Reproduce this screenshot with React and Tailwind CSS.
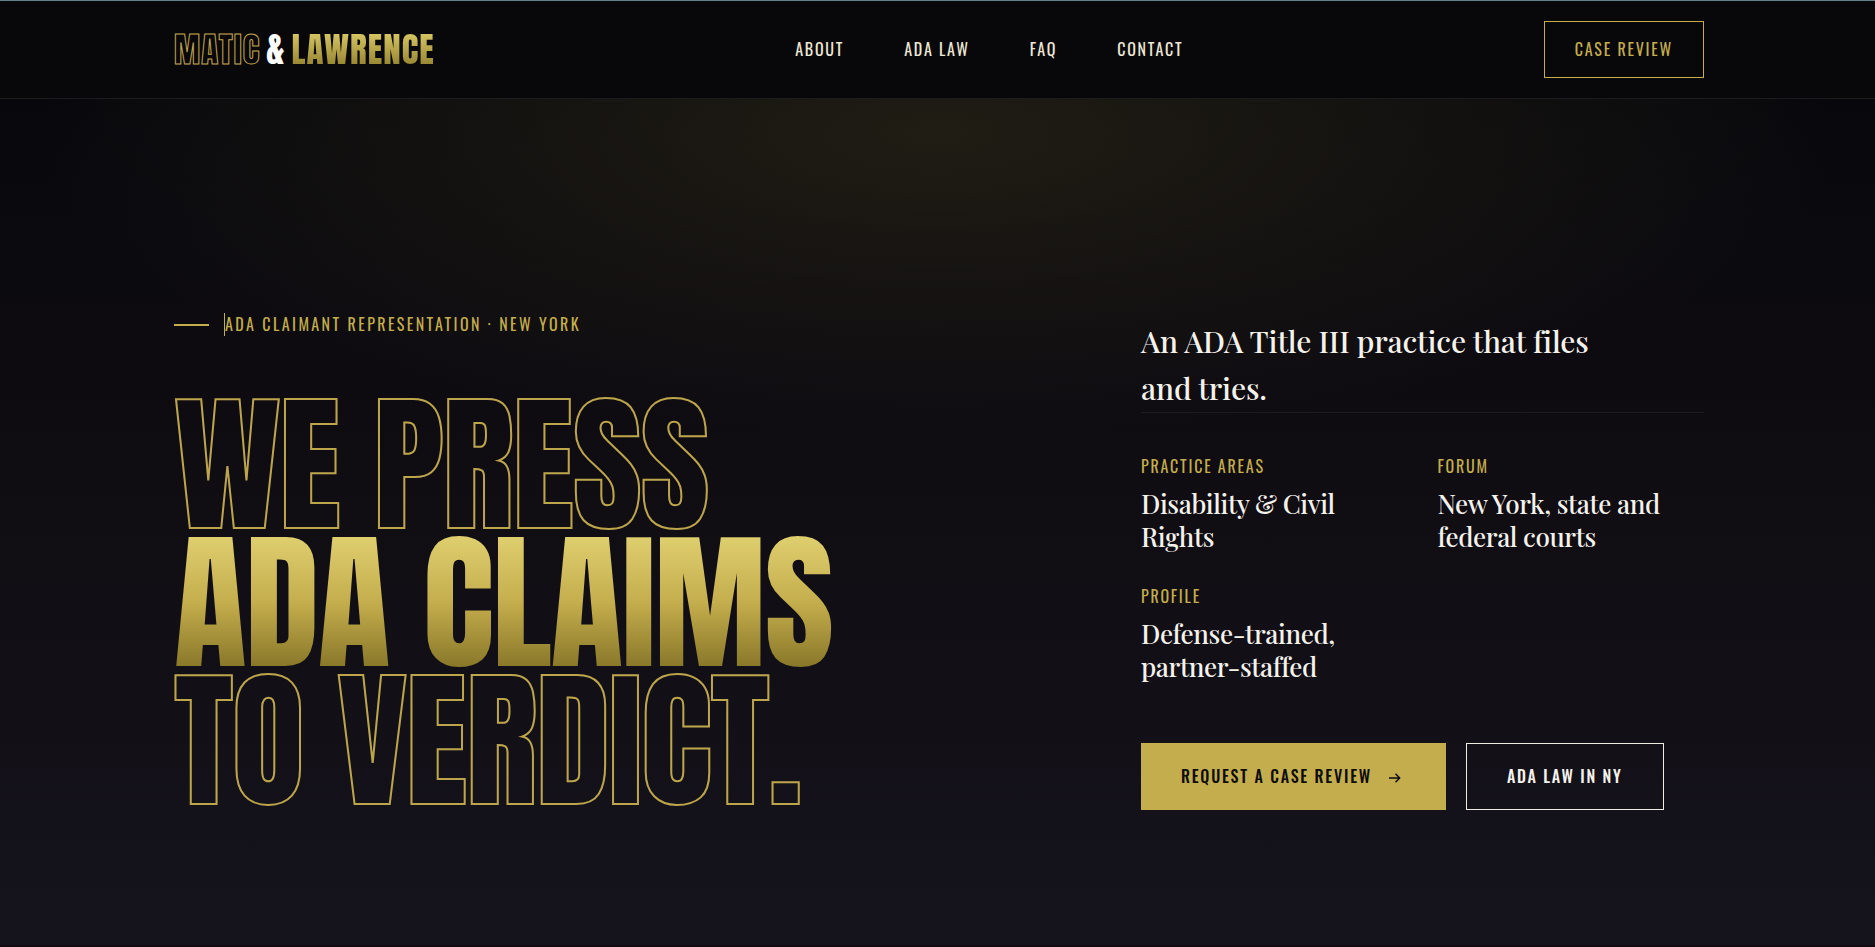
const display = "font-['Anton','Liberation_Sans',sans-serif] font-normal"
const label = "font-['Oswald','Liberation_Sans',sans-serif] text-[16px] leading-[23px] uppercase"
const serif = "font-['Playfair_Display','Liberation_Serif',serif] font-medium text-[#f5f2ec]"

const links = [
  { label: 'About', href: '#about' },
  { label: 'ADA Law', href: '#ada-law' },
  { label: 'FAQ', href: '#faq' },
  { label: 'Contact', href: '#contact' },
]

const facts = [
  { term: 'Practice Areas', value: 'Disability & Civil Rights' },
  { term: 'Forum', value: 'New York, state and federal courts' },
  { term: 'Profile', value: 'Defense-trained, partner-staffed' },
]

function Header() {
  return (
    <header className="border-t border-b border-t-[#5f8088] border-b-[#1c1b1d] bg-[#08080b]">
      <div className="flex items-center justify-between pl-[174px] pr-[171px] py-5">
        <a href="#top" className={`${display} flex items-center gap-1.5 text-[35px] leading-none tracking-[0.03em] uppercase`}>
          <span className="text-transparent [-webkit-text-stroke:1px_#c4a650]">Matic</span>
          <span className="text-white">&amp;</span>
          <span className="bg-linear-to-b from-[#d9c865] to-[#94832f] bg-clip-text text-transparent">Lawrence</span>
        </a>
        <nav className="flex gap-15">
          {links.map(l => (
            <a key={l.label} href={l.href} className={`${label} text-[#efe9d6] tracking-[0.11em]`}>
              {l.label}
            </a>
          ))}
        </nav>
        <a href="#review" className={`${label} border border-[#c4ad4c] px-[30px] py-4 text-[#c4ad4c] tracking-[0.11em]`}>
          Case Review
        </a>
      </div>
    </header>
  )
}

function Facts() {
  return (
    <dl className="grid grid-cols-2 gap-x-[30px] gap-y-8 border-t border-[#1c1b20] pt-[42px]">
      {facts.map(f => (
        <div key={f.term}>
          <dt className={`${label} text-[#c4ad4c] tracking-[0.11em]`}>{f.term}</dt>
          <dd className={`${serif} mt-[9px] text-[26px] leading-[33px] tracking-[-0.015em]`}>{f.value}</dd>
        </div>
      ))}
    </dl>
  )
}

export default function App() {
  return (
    <div id="top" className="min-h-screen flex flex-col bg-[#08080b]">
      <Header />
      <main className="grow flex flex-col justify-end pt-30 pb-[135px] border-b-2 border-[#120d15] bg-[radial-gradient(ellipse_48%_36%_at_50%_4%,#201d14,transparent),linear-gradient(to_bottom,#08080c,#100d13_50%,#15131c)]">
        <div className="grid grid-cols-[1fr_563px] gap-20 items-end pl-[174px] pr-[171px]">
          <div>
            <p className={`${label} flex items-center gap-[15px] text-[#c4ad4c] tracking-[0.15em]`}>
              <span className="w-[35px] h-0.5 bg-[#c4ad4c]" />
              <span className="border-l border-[#c4ad4c]">ADA Claimant Representation · New York</span>
            </p>
            <h1 className={`${display} mt-15 text-[150px] leading-[138px] tracking-[-0.01em] uppercase whitespace-nowrap`}>
              <span className="block text-transparent [-webkit-text-stroke:2px_#bda54c]">We press</span>
              <span className="block w-fit bg-linear-to-b from-[#e0d070] via-[#c4ad4c] to-[#857427] bg-clip-text text-transparent">ADA claims</span>
              <span className="block text-transparent [-webkit-text-stroke:2px_#bda54c]">to verdict.</span>
            </h1>
          </div>
          <div>
            <p className={`${serif} max-w-[460px] text-[30px] leading-[47px] tracking-[-0.005em]`}>
              An ADA Title III practice that files and tries.
            </p>
            <Facts />
            <div className="mt-15 flex gap-5">
              <a href="#review" className={`${label} flex items-center gap-4 h-[67px] bg-[#c4ad4c] px-10 font-medium text-[#0d0c0f] tracking-[0.11em]`}>
                Request a case review
                <svg className="w-[18px] h-[18px]" viewBox="0 0 18 18" fill="none" stroke="currentColor" strokeWidth="1.4">
                  <path d="M1 10H11.5M7.5 5.8L11.7 10L7.5 14.2" />
                </svg>
              </a>
              <a href="#ada-law" className={`${label} flex items-center h-[67px] border border-[#f0ece2] px-10 font-medium text-[#f5f2ec] tracking-[0.11em]`}>
                ADA Law in NY
              </a>
            </div>
          </div>
        </div>
      </main>
    </div>
  )
}
